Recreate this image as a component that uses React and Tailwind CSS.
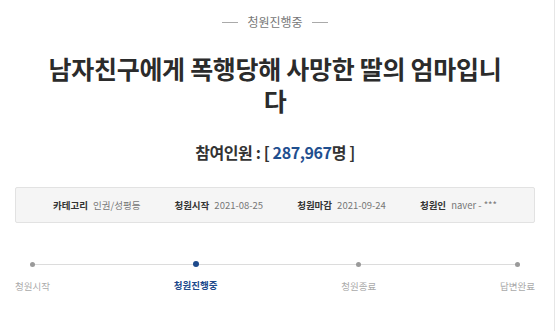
const infoItems = [
  { label: '카테고리', value: '인권/성평등' },
  { label: '청원시작', value: '2021-08-25' },
  { label: '청원마감', value: '2021-09-24' },
  { label: '청원인', value: 'naver - ***' }
]

const steps = ['청원시작', '청원진행중', '청원종료', '답변완료']
const activeStep = 1

export default function App() {
  return (
    <div className="h-[331px] w-[559px] bg-white font-['Noto_Sans_CJK_KR','Noto_Sans',sans-serif]">
      <div className="h-full w-[555px] border-r border-[#e6e6e6]">
        <div className="ml-[15px] w-[520px] pt-[13px]">
          <div className="flex items-center justify-center gap-[9px] text-[12px] leading-[18px] text-[#777]">
            <span className="h-px w-[16px] bg-[#aaa]" />
            <span>청원진행중</span>
            <span className="h-px w-[16px] bg-[#aaa]" />
          </div>

          <h1 className="mx-auto mt-[21px] w-[462px] text-center text-[25px] font-bold leading-[32px] tracking-[-0.3px] text-[#2b2b2b]">
            남자친구에게 폭행당해 사망한 딸의 엄마입니다
          </h1>

          <p className="mt-[26px] text-center text-[16px] font-bold leading-[20px] tracking-[-0.4px] text-[#333]">
            참여인원 : [ <span className="text-[#1f4f8f]">287,967</span>명 ]
          </p>

          <div className="mt-[25px] flex h-[36px] items-center justify-center gap-[34px] rounded-[2px] border border-[#e2e2e2] bg-[#f5f5f5] text-[9.5px]">
            {infoItems.map((item) => (
              <div key={item.label} className="flex items-center gap-[5px]">
                <span className="font-bold text-[#333]">{item.label}</span>
                <span className="text-[#777]">{item.value}</span>
              </div>
            ))}
          </div>

          <div className="relative mt-[38px] flex justify-between">
            <div className="absolute left-[16px] right-[17px] top-[3px] h-px bg-[#dcdcdc]" />
            {steps.map((step, i) => (
              <div key={step} className="relative flex flex-col items-center">
                <span className={i === activeStep ? 'h-[6px] w-[6px] rounded-full bg-[#1d4a8c]' : 'mt-[1px] h-[5px] w-[5px] rounded-full bg-[#9a9a9a]'} />
                <span className={i === activeStep ? 'mt-[11px] text-[9.5px] font-bold leading-[14px] text-[#1d4a8c]' : 'mt-[12px] text-[9.5px] leading-[14px] text-[#aaa]'}>{step}</span>
              </div>
            ))}
          </div>
        </div>
      </div>
    </div>
  )
}
